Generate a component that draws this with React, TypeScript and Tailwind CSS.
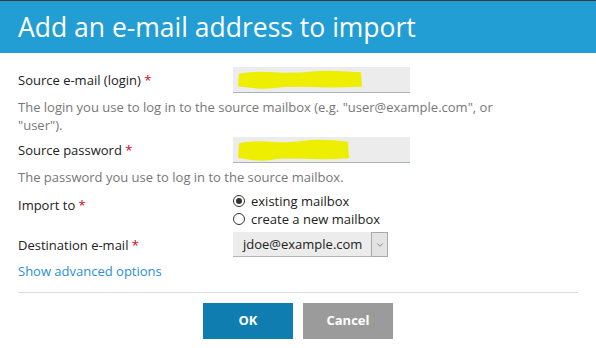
import { ChevronDown } from "lucide-react"

const font = { fontFamily: '"Open Sans", "Noto Sans", sans-serif' }

// yellow redaction marks over the inputs
function Scribble({ w, h, top }: { w: number; h: number; top: number }) {
  const d = `M2 ${h * 0.2} Q ${w * 0.12} ${h * 0.05} ${w * 0.3} ${h * 0.12} T ${w * 0.6} ${h * 0.08} T ${w - 1} ${h * 0.12} L ${w} ${h * 0.88} Q ${w * 0.8} ${h * 0.95} ${w * 0.6} ${h * 0.9} T ${w * 0.3} ${h * 0.95} T 1 ${h * 0.85} Z`
  return (
    <svg width={w} height={h} viewBox={`0 0 ${w} ${h}`} className="absolute left-[4px]" style={{ top }}>
      <path d={d} fill="#eeee00" />
    </svg>
  )
}

function Label({ text, className = "" }: { text: string; className?: string }) {
  return (
    <div className={`w-[215px] shrink-0 text-[13px] leading-[18px] text-[#222] ${className}`}>
      {text} <span className="text-[#d0021b]">*</span>
    </div>
  )
}

export default function App() {
  return (
    <div className="w-[596px] h-[348px] bg-white border-t border-[#3a3a3a] overflow-hidden" style={font}>
      {/* Header */}
      <div className="h-[52px] bg-[#229ed5] px-[18px] flex items-center">
        <h1 className="text-[26.5px] text-white leading-none">Add an e-mail address to import</h1>
      </div>

      <div className="px-[18px] pt-[14px]">
        <div className="flex items-center">
          <Label text="Source e-mail (login)" />
          <div className="relative w-[177px] h-[26px] bg-[#ececec] border-b border-[#aab3bc]">
            <Scribble w={125} h={19} top={3} />
          </div>
        </div>
        <p className="mt-[5px] max-w-[500px] text-[13px] leading-[18px] text-[#777]">
          The login you use to log in to the source mailbox (e.g. "user@example.com", or "user").
        </p>

        <div className="flex items-center mt-[3px]">
          <Label text="Source password" />
          <div className="relative w-[177px] h-[26px] bg-[#ececec] border-b border-[#aab3bc]">
            <Scribble w={112} h={22} top={2} />
          </div>
        </div>
        <p className="mt-[5px] text-[13px] leading-[18px] text-[#777]">
          The password you use to log in to the source mailbox.
        </p>

        <div className="flex items-start mt-[6px]">
          <Label text="Import to" className="pt-[4px]" />
          <div className="flex flex-col text-[13px] text-[#222] leading-[18px]">
            <label className="flex items-center gap-[6px]">
              <span className="w-[12px] h-[12px] rounded-full border border-[#333] flex items-center justify-center">
                <span className="w-[6px] h-[6px] rounded-full bg-[#333]" />
              </span>
              existing mailbox
            </label>
            <label className="flex items-center gap-[6px]">
              <span className="w-[12px] h-[12px] rounded-full border border-[#333]" />
              create a new mailbox
            </label>
          </div>
        </div>

        <div className="flex items-center mt-[4px]">
          <Label text="Destination e-mail" />
          <div className="flex w-[155px] h-[25px] bg-[#ececec] border-b border-[#b5b5b5]">
            <span className="flex-1 pl-[10px] text-[13px] text-[#222] leading-[25px]">jdoe@example.com</span>
            <span className="w-[17px] h-[25px] bg-[#e3e3e3] border border-[#aaa] flex items-center justify-center">
              <ChevronDown className="w-[10px] h-[10px] text-[#555]" strokeWidth={1.5} />
            </span>
          </div>
        </div>

        <a className="block mt-[5px] text-[13px] leading-[18px] text-[#2b8fd6]">Show advanced options</a>

        <div className="mt-[12px] border-t border-[#ddd]" />

        <div className="flex justify-center gap-[10px] mt-[10px]">
          <button className="w-[90px] h-[36px] bg-[#0f7db0] text-white text-[13px] font-bold">OK</button>
          <button className="w-[90px] h-[36px] bg-[#9b9b9b] text-white text-[13px] font-bold">Cancel</button>
        </div>
      </div>
    </div>
  )
}
